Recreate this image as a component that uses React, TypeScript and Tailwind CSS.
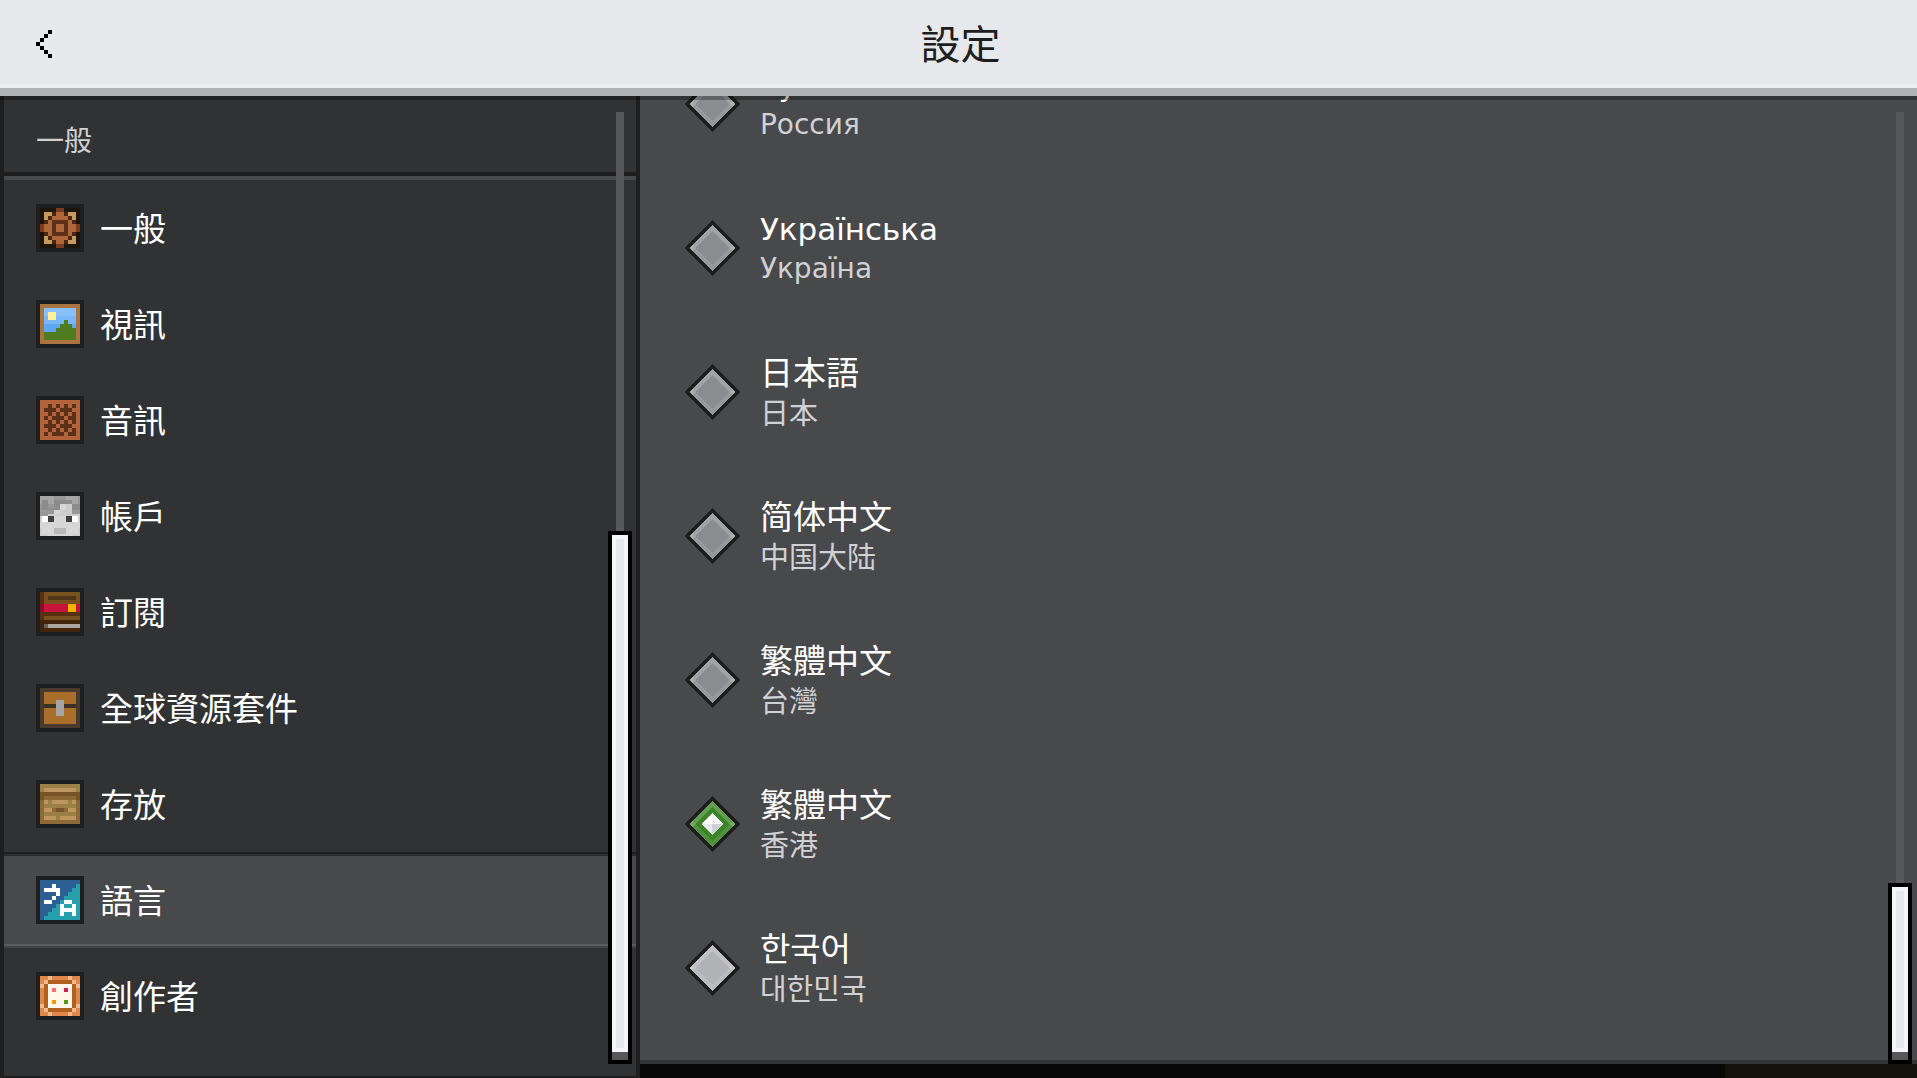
import React, { useState } from "react";

type Palette = Record<string, string>;

function PixelArt({ rows, palette }: { rows: string[]; palette: Palette }) {
  const size = rows.length;
  return (
    <svg
      viewBox={`0 0 ${size} ${size}`}
      shapeRendering="crispEdges"
      aria-hidden="true"
      className="size-12 shrink-0 border-4 border-[#1e1e1f]"
    >
      {rows.flatMap((row, y) =>
        row.split("").map((c, x) => (
          <rect key={`${x}-${y}`} x={x} y={y} width={1} height={1} fill={palette[c]} />
        )),
      )}
    </svg>
  );
}

const sections = [
  {
    label: "一般",
    palette: { k: "#1b150b", r: "#7a3b20", t: "#c49a5f", b: "#4a2815", o: "#b0683a", n: "#5b3219" },
    rows: [
      "kkkkrrkkkk",
      "kttboobttk",
      "ktboooobtk",
      "kbonnnnobk",
      "roonoonoor",
      "roonoonoor",
      "kbonnnnobk",
      "ktboooobtk",
      "kttboobttk",
      "kkkkrrkkkk",
    ],
  },
  {
    label: "視訊",
    palette: { w: "#a97440", a: "#87c1fb", b: "#79b8f8", c: "#5ea7f2", y: "#fff09a", g: "#4f7c1f" },
    rows: [
      "wwwwwwwwww",
      "waaaaaaaaw",
      "wayyaaaaaw",
      "wbyybbbbbw",
      "wbbbbbgbbw",
      "wccccgggcw",
      "wcccgggggw",
      "wggggggggw",
      "wggggggggw",
      "wwwwwwwwww",
    ],
  },
  {
    label: "音訊",
    palette: { o: "#b3643a", d: "#5a3019" },
    rows: [
      "oooooooooo",
      "oododododo",
      "odddodddoo",
      "oododododo",
      "ododddoddo",
      "oododododo",
      "odddodddoo",
      "oododododo",
      "ododddoddo",
      "oooooooooo",
    ],
  },
  {
    label: "帳戶",
    palette: {
      a: "#a6a6a6", b: "#8c8c8c", c: "#989898", d: "#b2b2b2", l: "#cdcdcd", m: "#d6d6d6",
      w: "#ffffff", k: "#3f3f3f", n: "#b8b8b8",
    },
    rows: [
      "aaaaaaaccccccaaaaaac",
      "aaaaaaaccccccaaaaaac",
      "abbbaaabbbbbbbbbaaac",
      "abbbaaabbbbbbbbbaaac",
      "cbbbcccbbbmmmlllbbbb",
      "cbbbcccbbbmmmlllbbbb",
      "cbbbbbbbbbmmmlllbbbb",
      "cccccccmmmllllllcccc",
      "cccccccmmmllllllcccc",
      "ccccllllllllllllllll",
      "lwwwkkkmmmmmmkkkwwwl",
      "lwwwkkkmmmmmmkkkwwwl",
      "lwwwkkkmmmmmmkkkwwwl",
      "mmmmmmmmmmmmmmmmmmmm",
      "mmmmmmmmmmmmmmmmmmmm",
      "mmmmmmmmmmmmmmmmmmmm",
      "lmmmmmmnnnnnnmmmmmml",
      "lmmmmmmnnnnnnmmmmmml",
      "lmmmmmmnnnnnnmmmmmml",
      "llllmmmmmmmmmmmmllll",
    ],
  },
  {
    label: "訂閱",
    palette: {
      b: "#57300f", t: "#77521f", d: "#51351a", r: "#8c0a22", c: "#c8143c", y: "#f5b000",
      k: "#43240c", g: "#6e625c", s: "#b0a59c",
    },
    rows: [
      "bttttttttt",
      "btdddddddt",
      "bttttttttt",
      "rccccccyyc",
      "rccccccyyc",
      "bbbbbbbbbb",
      "bttttttttt",
      "kkkkkkkkkk",
      "kgssssssss",
      "kkkkkkkkkk",
    ],
  },
  {
    label: "全球資源套件",
    palette: { b: "#483a2c", o: "#a96f2a", d: "#3b3126", s: "#a5a5a5" },
    rows: [
      "bbbbbbbbbb",
      "boooooooob",
      "boooooooob",
      "booossooob",
      "bdddssdddb",
      "booossooob",
      "booossooob",
      "boooooooob",
      "boooooooob",
      "bbbbbbbbbb",
    ],
  },
  {
    label: "存放",
    palette: { a: "#9b8046", l: "#bc965d", d: "#775426", m: "#8c6936" },
    rows: [
      "aaaaaaaaaa",
      "alllllllla",
      "dddddddddd",
      "dmmmmmmmmd",
      "mlallllalm",
      "maaaaaaaam",
      "mllmddmllm",
      "maaaaaaaam",
      "mlllallllm",
      "mmmmmmmmmm",
    ],
  },
  {
    label: "語言",
    palette: { b: "#2c5f94", t: "#26a0ac", w: "#ffffff" },
    rows: [
      "bbbbbbbbbb",
      "bbbwbbbbbt",
      "bwwwwbbbtt",
      "bbbbwbbttt",
      "bbbwbbtttt",
      "bwwbbtwwtt",
      "bbbbtwttwt",
      "bbbttwwwwt",
      "bbtttwttwt",
      "bttttttttt",
    ],
  },
  {
    label: "創作者",
    palette: {
      o: "#e08849", l: "#f0b68c", b: "#b0601f", w: "#fff8ea", p: "#ff6f6f", m: "#d0205a",
      y: "#f09a00", g: "#559a16",
    },
    rows: [
      "oolooooloo",
      "olbbbbbblo",
      "lbwwwwwwbl",
      "obwpwwmwbo",
      "obwwwwwwbo",
      "obwwwwwwbo",
      "obwywwgwbo",
      "lbwwwwwwbl",
      "olbbbbbblo",
      "oolooooloo",
    ],
  },
];

const cyrillic = "font-['DejaVu_Sans',sans-serif] pt-0.5";
const languages = [
  { id: "ru", name: "Русский", region: "Россия", font: cyrillic, nameSize: "text-[31px]", regionSize: "text-[28px]" },
  { id: "uk", name: "Українська", region: "Україна", font: cyrillic, nameSize: "text-[31px]", regionSize: "text-[28px]" },
  { id: "ja", name: "日本語", region: "日本", font: "font-['Noto_Sans_CJK_JP',sans-serif] pb-0.5", nameSize: "text-[33px]", regionSize: "text-[29px]" },
  { id: "zh-CN", name: "简体中文", region: "中国大陆", font: "font-['Noto_Sans_CJK_SC',sans-serif] pb-0.5", nameSize: "text-[33px]", regionSize: "text-[29px]" },
  { id: "zh-TW", name: "繁體中文", region: "台灣", font: "font-['Noto_Sans_CJK_TC',sans-serif] pb-0.5", nameSize: "text-[33px]", regionSize: "text-[29px]" },
  { id: "zh-HK", name: "繁體中文", region: "香港", font: "font-['Noto_Sans_CJK_TC',sans-serif] pb-0.5", nameSize: "text-[33px]", regionSize: "text-[29px]" },
  { id: "ko", name: "한국어", region: "대한민국", font: "font-['Noto_Sans_CJK_KR',sans-serif] pb-0.5", nameSize: "text-[33px]", regionSize: "text-[29px]" },
];

const diamondTones = {
  idle: { top: "#a2a3a5", bottom: "#97989b", side: "#adaeb0", fill: "#8c8d90" },
  hover: { top: "#c1c1c4", bottom: "#bbbcbf", side: "#c8c8ca", fill: "#b1b2b5" },
  on: { top: "#639d52", bottom: "#4f913c", side: "#77aa68", fill: "#3c8527" },
};

function Diamond({ tone }: { tone: keyof typeof diamondTones }) {
  const c = diamondTones[tone];
  return (
    <svg viewBox="0 0 56 56" shapeRendering="crispEdges" aria-hidden="true" className="size-14 shrink-0">
      <path d="M28 0 56 28 28 56 0 28z" fill="#1e1e1f" />
      <path d="M5 28 28 5 51 28z" fill={c.top} />
      <path d="M5 28 28 51 51 28z" fill={c.bottom} />
      <path d="M5 28 8 25 11 28 8 31zM51 28 48 25 45 28 48 31z" fill={c.side} />
      <path d="M28 11 45 28 28 45 11 28z" fill={c.fill} />
      {tone === "on" && (
        <>
          <path d="M28 17V28H17z" fill="#ffffff" />
          <path d="M28 17V28H39z" fill="#f3f4f5" />
          <path d="M28 39V28H17z" fill="#e6e8eb" />
          <path d="M28 39V28H39z" fill="#d0d1d4" />
        </>
      )}
    </svg>
  );
}

function Scrollbar({ thumb, className }: { thumb: string; className: string }) {
  return (
    <div aria-hidden="true" className={`pointer-events-none absolute top-4 flex w-6 flex-col items-center ${className}`}>
      <div className="w-2 flex-1 bg-[#58585a]" />
      <div className={`flex w-full flex-col border-4 border-black bg-[#58585a] pb-2 ${thumb}`}>
        <div className="flex-1 border-4 border-[#f4f6f9] bg-[#e6e8eb]" />
      </div>
    </div>
  );
}

export default function App() {
  const [section, setSection] = useState("語言");
  const [language, setLanguage] = useState("zh-HK");

  return (
    <div className="flex h-screen flex-col overflow-hidden bg-[linear-gradient(90deg,#070707_90%,#14110a_90%)] font-['Noto_Sans_CJK_TC',sans-serif] text-white">
      <header className="relative z-10 grid h-24 shrink-0 grid-cols-[1fr_auto_1fr] items-center border-b-8 border-[#b1b2b5] bg-[#e6e8eb] shadow-[inset_0_-4px_0_#ecedee,0_4px_0_rgba(0,0,0,0.3)]">
        <button type="button" aria-label="返回" className="ml-6 flex size-10 items-center justify-center">
          <svg viewBox="0 0 4 7" shapeRendering="crispEdges" aria-hidden="true" className="h-7 w-4">
            <path
              d="M3 0h1v1H3zM2 1h1v1H2zM1 2h1v1H1zM0 3h1v1H0zM1 4h1v1H1zM2 5h1v1H2zM3 6h1v1H3z"
              fill="#000"
            />
          </svg>
        </button>
        <h1 className="pb-1 pl-1 text-[40px] leading-12 text-[#1e1e1f]">設定</h1>
      </header>

      <div className="flex min-h-0 flex-1">
        <aside className="relative w-[33.38%] border-x-4 border-b-2 border-[#1e1e1f] bg-[#313233]">
          <h2 className="flex h-19 items-center px-8 pt-2.5 text-[28px] text-[#d0d1d4]">一般</h2>
          <nav className="border-t-4 border-[#1e1e1f] shadow-[inset_0_4px_0_#48494a]">
            <ul className="pt-1">
              {sections.map((s) => (
                <li key={s.label}>
                  <button
                    type="button"
                    aria-current={s.label === section ? "page" : undefined}
                    onClick={() => setSection(s.label)}
                    className={`flex h-24 w-full items-center gap-4 px-8 text-left text-[33px] leading-12 ${
                      s.label === section
                        ? "bg-[#48494a] shadow-[inset_0_2px_0_#1e1e1f,inset_0_4px_0_#2b2c2d,inset_0_-2px_0_#434445,inset_0_-4px_0_#5a5b5c]"
                        : ""
                    }`}
                  >
                    <PixelArt rows={s.rows} palette={s.palette as unknown as Palette} />
                    <span className="pb-0.5">{s.label}</span>
                  </button>
                </li>
              ))}
            </ul>
          </nav>
          <Scrollbar thumb="h-[56%]" className="right-1 bottom-3" />
        </aside>

        <main className="flex min-w-0 flex-1 flex-col pb-3.5">
          <div className="relative min-h-0 flex-1 border-b-4 border-[#333334] bg-[#48494a]">
            <fieldset aria-label="語言" className="flex h-full flex-col justify-end overflow-hidden pb-5">
              {languages.map((l) => (
                <label key={l.id} className="flex h-36 shrink-0 items-center gap-5 pl-11">
                  <input
                    type="radio"
                    name="language"
                    value={l.id}
                    checked={language === l.id}
                    onChange={() => setLanguage(l.id)}
                    className="sr-only"
                  />
                  <Diamond tone={language === l.id ? "on" : l.id === "ko" ? "hover" : "idle"} />
                  <span className={`flex flex-col ${l.font}`}>
                    <span className={`leading-10 ${l.nameSize}`}>{l.name}</span>
                    <span className={`leading-10 text-[#d0d1d4] ${l.regionSize}`}>{l.region}</span>
                  </span>
                </label>
              ))}
            </fieldset>
            <Scrollbar thumb="h-[19%]" className="right-[5px] -bottom-1" />
          </div>
        </main>
      </div>
    </div>
  );
}
